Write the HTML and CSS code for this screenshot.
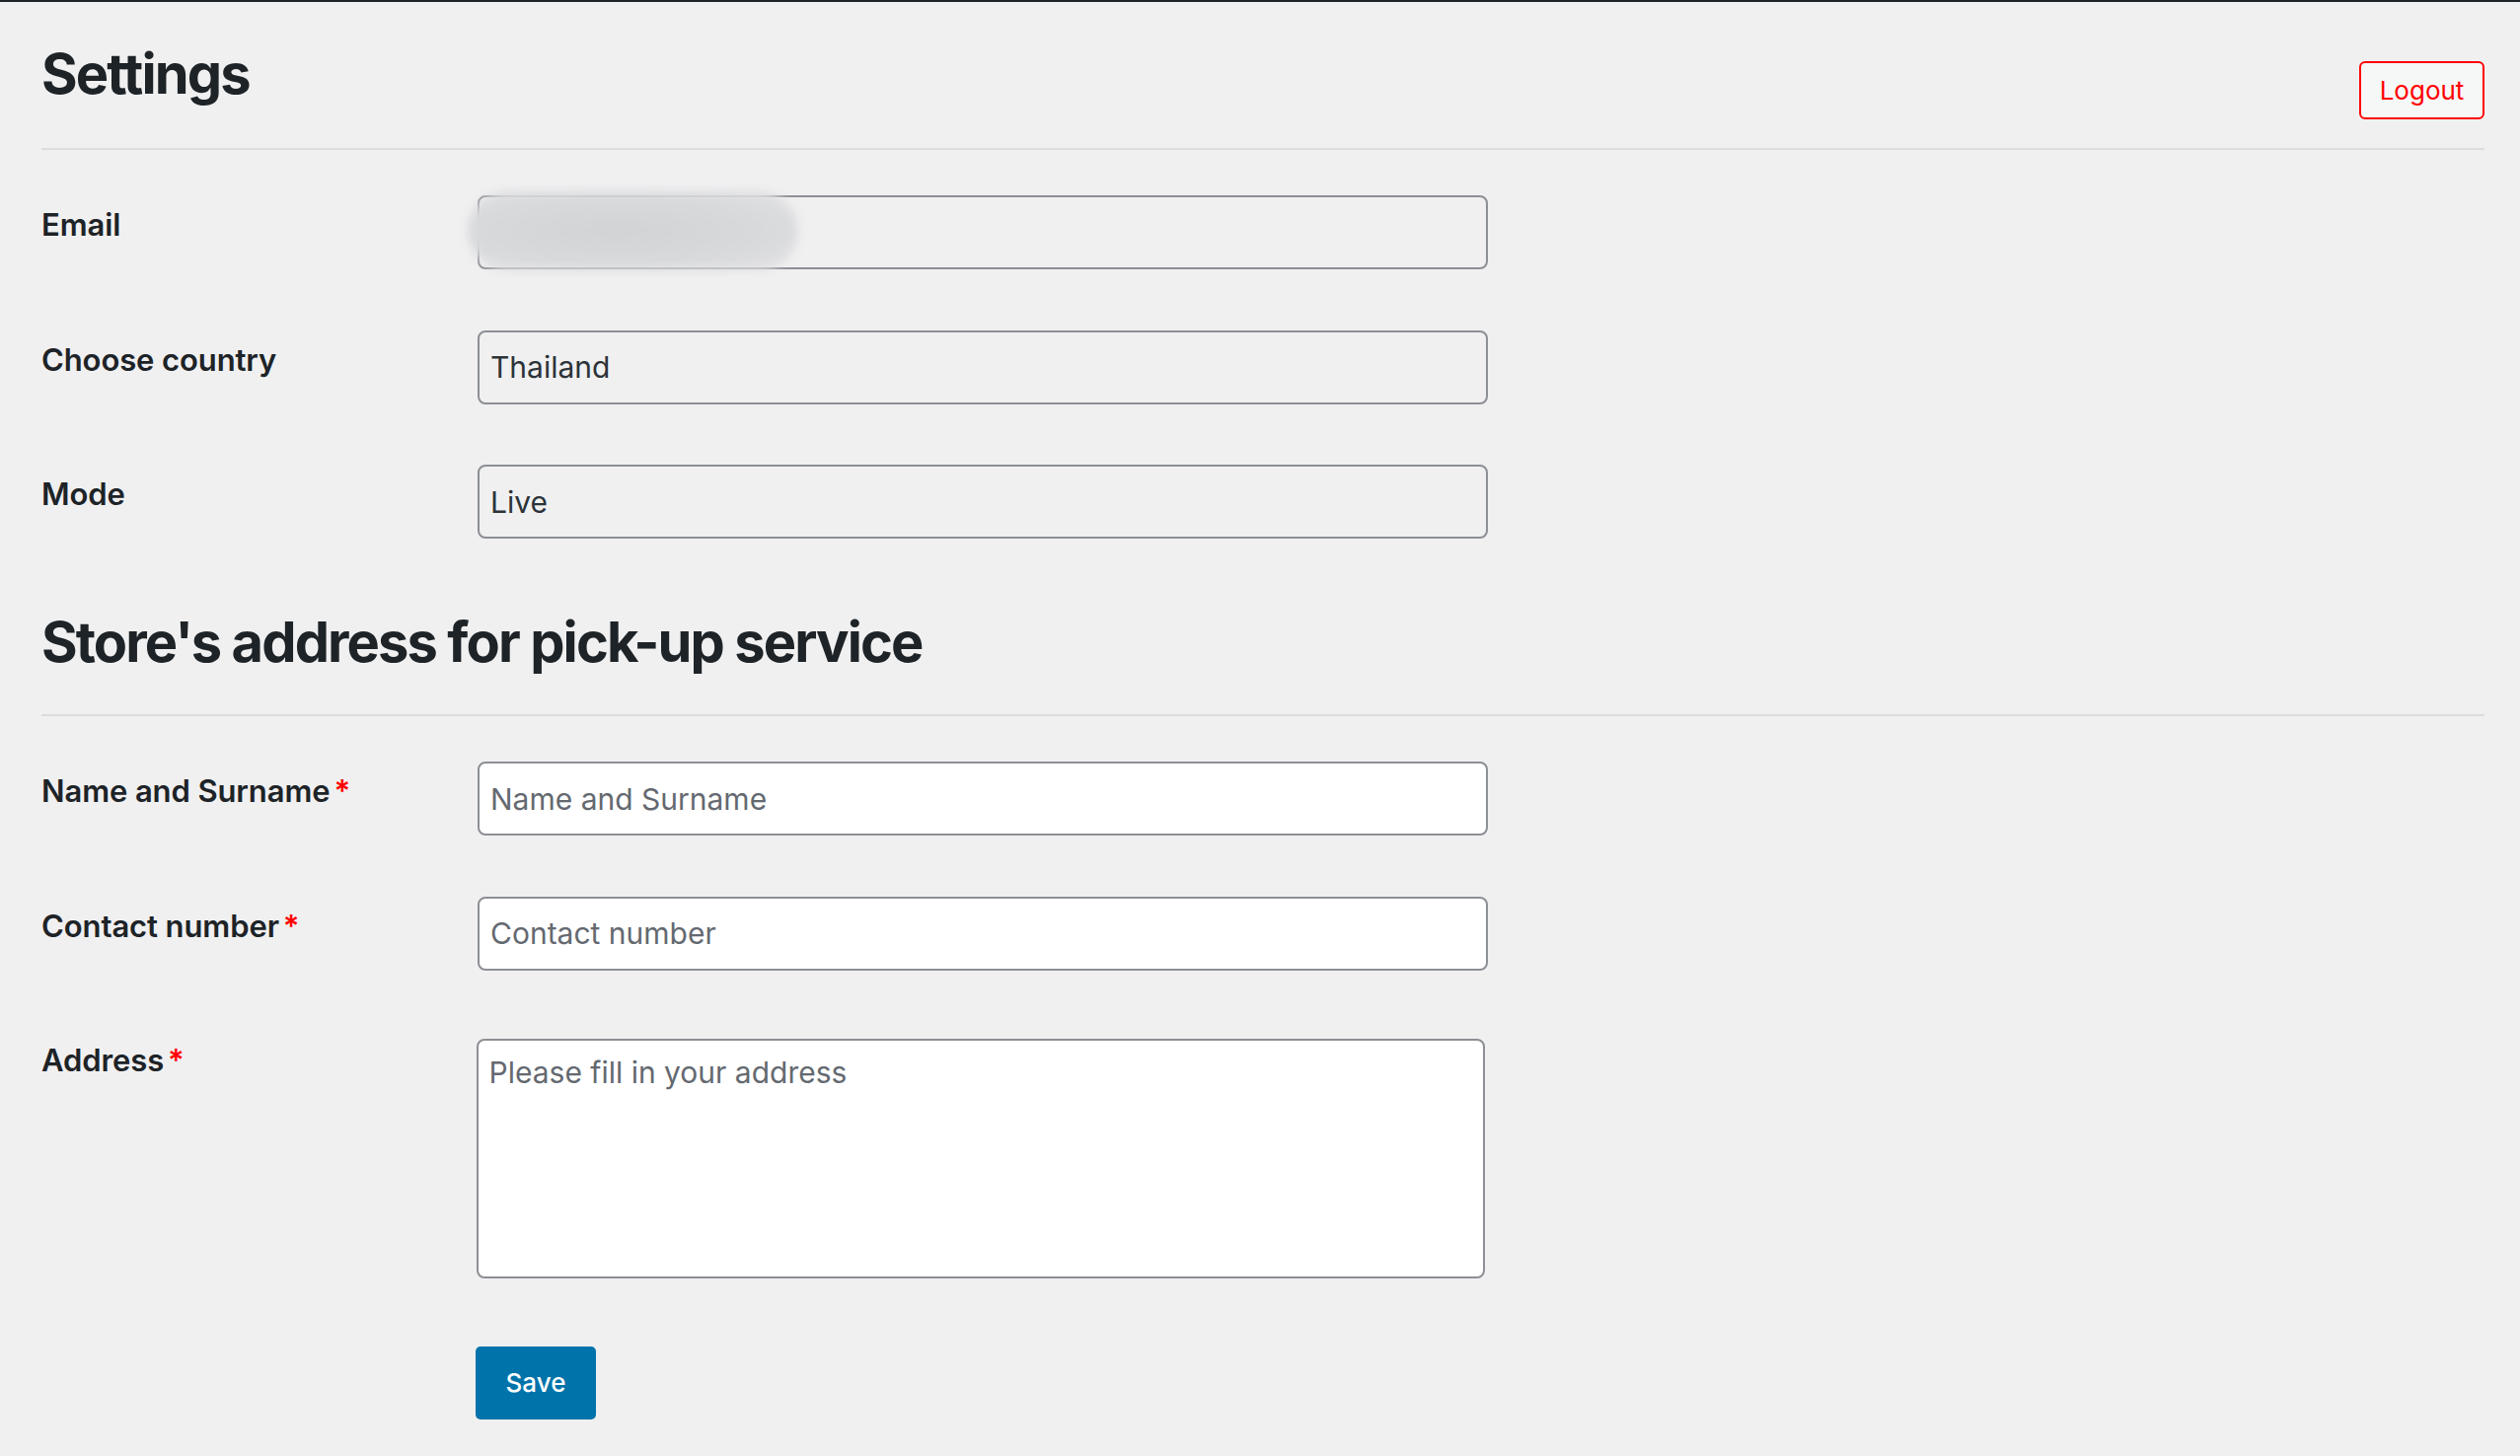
FILE: index.html
```html
<!DOCTYPE html>
<html lang="en">
<head>
<meta charset="utf-8">
<title>Settings</title>
<link rel="stylesheet" href="styles.css">
</head>
<body>
<div class="topbar"></div>
<div class="wrap">
  <header class="page-head">
    <h1 class="title">Settings</h1>
    <button class="logout" type="button">Logout</button>
  </header>

  <div class="form">
    <div class="row">
      <label class="label">Email</label>
      <div class="field">
        <input class="input input-ro" type="text" value="" readonly>
        <div class="redact"></div>
      </div>
    </div>
    <div class="row">
      <label class="label">Choose country</label>
      <div class="field">
        <input class="input input-ro" type="text" value="Thailand" readonly>
      </div>
    </div>
    <div class="row">
      <label class="label">Mode</label>
      <div class="field">
        <input class="input input-ro" type="text" value="Live" readonly>
      </div>
    </div>
  </div>

  <h2 class="section-head">Store's address for pick-up service</h2>

  <div class="form">
    <div class="row">
      <label class="label">Name and Surname<span class="req">*</span></label>
      <div class="field">
        <input class="input" type="text" placeholder="Name and Surname">
      </div>
    </div>
    <div class="row">
      <label class="label">Contact number<span class="req">*</span></label>
      <div class="field">
        <input class="input" type="text" placeholder="Contact number">
      </div>
    </div>
    <div class="row">
      <label class="label">Address<span class="req">*</span></label>
      <div class="field">
        <textarea class="textarea" placeholder="Please fill in your address"></textarea>
      </div>
    </div>
    <div class="row row-actions">
      <button class="save" type="button">Save</button>
    </div>
  </div>
</div>
</body>
</html>
```

FILE: styles.css
```css
* { box-sizing: border-box; }

html, body {
  margin: 0;
  padding: 0;
  background: #f0f0f1;
  font-family: Inter, "Noto Sans", "Liberation Sans", sans-serif;
  color: #1d2327;
}

.topbar {
  height: 2px;
  background: #1d2327;
}

.wrap {
  padding: 0 36px 0 42px;
}

.page-head {
  display: flex;
  justify-content: space-between;
  align-items: flex-start;
  padding: 39px 0 29px;
  border-bottom: 2px solid #dcdcde;
}

.title,
.section-head {
  margin: 0;
  font-size: 56px;
  line-height: 68px;
  font-weight: 700;
  letter-spacing: -1.9px;
  color: #1d2327;
}

.section-head {
  margin-top: 71px;
  padding-bottom: 39px;
  border-bottom: 2px solid #dcdcde;
}

.logout {
  margin-top: 21px;
  width: 127px;
  height: 59px;
  padding: 0;
  background: #f6f7f7;
  border: 2px solid #ff0000;
  border-radius: 6px;
  color: #ff0000;
  font-family: inherit;
  font-size: 26px;
  font-weight: 400;
  cursor: pointer;
}

.form {
  display: flex;
  flex-direction: column;
  gap: 61.5px;
  padding-top: 46px;
}

.row {
  display: flex;
  align-items: flex-start;
}

.label {
  flex: 0 0 442px;
  padding-top: 11px;
  font-size: 31px;
  line-height: 38px;
  font-weight: 600;
  letter-spacing: -0.1px;
  color: #1d2327;
}

.req {
  color: #ff0000;
  margin-left: 4px;
}

.field {
  position: relative;
  width: 1024px;
}

.input {
  display: block;
  width: 1024px;
  height: 75px;
  margin: 0;
  padding: 0 11px;
  border: 2px solid #8c8f94;
  border-radius: 8px;
  background: #ffffff;
  font-family: inherit;
  font-size: 30px;
  color: #2c3338;
  outline: none;
}

.input-ro {
  background: #f0f0f1;
}

.input::placeholder,
.textarea::placeholder {
  color: #646970;
  opacity: 1;
}

.redact {
  position: absolute;
  left: -10px;
  top: -4px;
  width: 335px;
  height: 80px;
  border-radius: 40px;
  background: radial-gradient(ellipse at 45% 50%, #d2d3d5 0%, #d8d9db 55%, #e2e2e4 100%);
  filter: blur(5px);
}

.textarea {
  display: block;
  width: 1022px;
  height: 243px;
  margin: 7.5px 0 0 -1.5px;
  padding: 10px 11px;
  border: 2px solid #8c8f94;
  border-radius: 8px;
  background: #ffffff;
  font-family: inherit;
  font-size: 30px;
  line-height: 45px;
  color: #2c3338;
  resize: none;
  outline: none;
}

.row-actions {
  margin-top: 7.5px;
  padding-left: 440px;
}

.save {
  width: 122px;
  height: 74px;
  padding: 0;
  border: none;
  border-radius: 5px;
  background: #0073aa;
  color: #ffffff;
  font-family: inherit;
  font-size: 26px;
  font-weight: 500;
  cursor: pointer;
}
```
